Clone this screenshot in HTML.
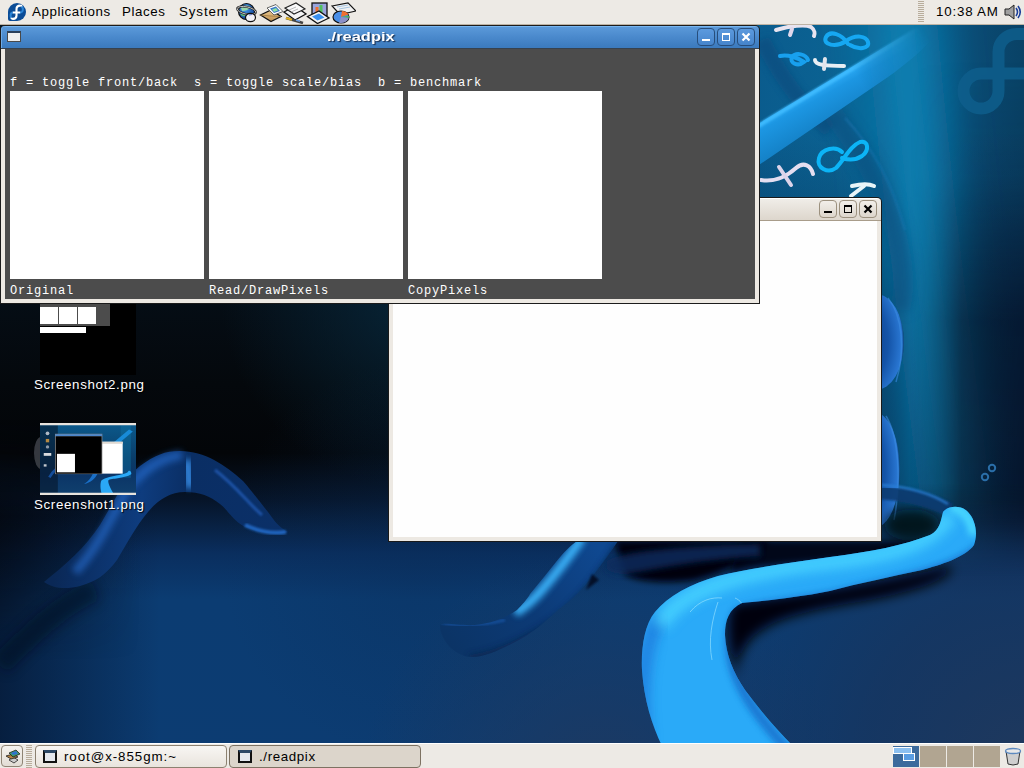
<!DOCTYPE html>
<html><head><meta charset="utf-8">
<style>
*{margin:0;padding:0;box-sizing:border-box}
html,body{width:1024px;height:768px;overflow:hidden;background:#0a2a50}
body{position:relative;font-family:"Liberation Sans",sans-serif}
.abs{position:absolute}
#wall{position:absolute;left:0;top:0;width:1024px;height:768px}
/* top panel */
#toppanel{position:absolute;left:0;top:0;width:1024px;height:25px;background:#edeae5;border-bottom:1px solid #bdb3a4}
.ptxt{position:absolute;top:4px;font-size:13.33px;color:#000;white-space:pre;line-height:15px}
/* bottom panel */
#botpanel{position:absolute;left:0;top:743px;width:1024px;height:25px;background:#edeae5;border-top:1px solid #fff}
/* windows */
.win{position:absolute}
.mono{font-family:"Liberation Mono",monospace;font-size:12px;letter-spacing:0.8px;color:#fff;white-space:pre;position:absolute;line-height:13px}
.btn{position:absolute;width:18px;height:18px;border-radius:4px}
.lbl{position:absolute;font-size:13.33px;color:#fff;white-space:pre;text-shadow:1px 1px 1px #000;line-height:15px}
</style></head><body>

<svg id="wall" width="1024" height="768" viewBox="0 0 1024 768">
<defs>
  <linearGradient id="bg" x1="0" y1="0" x2="0" y2="768" gradientUnits="userSpaceOnUse">
    <stop offset="0" stop-color="#061826"/>
    <stop offset="0.39" stop-color="#050d15"/>
    <stop offset="0.5" stop-color="#04080c"/>
    <stop offset="0.59" stop-color="#030508"/>
    <stop offset="0.65" stop-color="#061428"/>
    <stop offset="0.72" stop-color="#0a2e5e"/>
    <stop offset="0.78" stop-color="#0b3c72"/>
    <stop offset="1" stop-color="#0c3c72"/>
  </linearGradient>
  <linearGradient id="teal" x1="740" y1="0" x2="1024" y2="0" gradientUnits="userSpaceOnUse">
    <stop offset="0" stop-color="#0a5a8c"/>
    <stop offset="0.4" stop-color="#0b6494"/>
    <stop offset="0.65" stop-color="#0b5a88"/>
    <stop offset="0.82" stop-color="#0a4b74"/>
    <stop offset="1" stop-color="#094266"/>
  </linearGradient>
  <linearGradient id="tealfade" x1="0" y1="0" x2="0" y2="768" gradientUnits="userSpaceOnUse">
    <stop offset="0" stop-color="#fff" stop-opacity="1"/>
    <stop offset="0.63" stop-color="#fff" stop-opacity="1"/>
    <stop offset="0.75" stop-color="#fff" stop-opacity="0"/>
  </linearGradient>
  <mask id="tmask" maskUnits="userSpaceOnUse" x="0" y="0" width="1024" height="768"><rect x="0" y="0" width="1024" height="768" fill="url(#tealfade)"/></mask>
  <linearGradient id="rdarkH" x1="910" y1="0" x2="1024" y2="0" gradientUnits="userSpaceOnUse">
    <stop offset="0" stop-color="#06162a" stop-opacity="0"/>
    <stop offset="0.45" stop-color="#06162a" stop-opacity="0.75"/>
    <stop offset="1" stop-color="#05132a" stop-opacity="0.95"/>
  </linearGradient>
  <linearGradient id="rdarkV" x1="0" y1="60" x2="0" y2="640" gradientUnits="userSpaceOnUse">
    <stop offset="0" stop-color="#fff" stop-opacity="0"/>
    <stop offset="0.2" stop-color="#fff" stop-opacity="0.15"/>
    <stop offset="0.45" stop-color="#fff" stop-opacity="0.85"/>
    <stop offset="0.8" stop-color="#fff" stop-opacity="1"/>
    <stop offset="1" stop-color="#fff" stop-opacity="0"/>
  </linearGradient>
  <mask id="rdm" maskUnits="userSpaceOnUse" x="0" y="0" width="1024" height="768"><rect x="0" y="0" width="1024" height="768" fill="url(#rdarkV)"/></mask>
  <linearGradient id="beamH" x1="860" y1="0" x2="1010" y2="0" gradientUnits="userSpaceOnUse">
    <stop offset="0" stop-color="#0d74a4" stop-opacity="0"/>
    <stop offset="0.3" stop-color="#0d74a4" stop-opacity="0.45"/>
    <stop offset="0.55" stop-color="#0d74a4" stop-opacity="0.75"/>
    <stop offset="1" stop-color="#0d74a4" stop-opacity="0"/>
  </linearGradient>
  <linearGradient id="tubeD" x1="820" y1="80" x2="845" y2="125" gradientUnits="userSpaceOnUse">
    <stop offset="0" stop-color="#34b4ff"/>
    <stop offset="0.3" stop-color="#1c96e2"/>
    <stop offset="1" stop-color="#127cc0"/>
  </linearGradient>
  <linearGradient id="leftdark" x1="0" y1="0" x2="160" y2="0" gradientUnits="userSpaceOnUse">
    <stop offset="0" stop-color="#04122a" stop-opacity="0.7"/>
    <stop offset="1" stop-color="#04122a" stop-opacity="0"/>
  </linearGradient>
  <radialGradient id="brdusk" cx="1024" cy="760" r="320" gradientUnits="userSpaceOnUse">
    <stop offset="0" stop-color="#22385a" stop-opacity="0.85"/>
    <stop offset="0.5" stop-color="#1c3256" stop-opacity="0.55"/>
    <stop offset="1" stop-color="#1c3256" stop-opacity="0"/>
  </radialGradient>
  <radialGradient id="bldusk" cx="600" cy="790" r="240" gradientUnits="userSpaceOnUse">
    <stop offset="0" stop-color="#22385c" stop-opacity="0.75"/>
    <stop offset="1" stop-color="#22385c" stop-opacity="0"/>
  </radialGradient>
  <linearGradient id="tubeG" x1="700" y1="560" x2="770" y2="700" gradientUnits="userSpaceOnUse">
    <stop offset="0" stop-color="#40caff"/>
    <stop offset="0.3" stop-color="#2ba8f8"/>
    <stop offset="1" stop-color="#2596f0"/>
  </linearGradient>
  <linearGradient id="tubeEnd" x1="0" y1="505" x2="0" y2="580" gradientUnits="userSpaceOnUse">
    <stop offset="0" stop-color="#3ad4ff"/>
    <stop offset="1" stop-color="#2aa6f6"/>
  </linearGradient>
  <filter id="b1" x="-20%" y="-20%" width="140%" height="140%"><feGaussianBlur stdDeviation="1"/></filter>
  <filter id="b3" x="-30%" y="-30%" width="160%" height="160%"><feGaussianBlur stdDeviation="3"/></filter>
  <filter id="b6" x="-40%" y="-40%" width="180%" height="180%"><feGaussianBlur stdDeviation="6"/></filter>
  <linearGradient id="tdarkV" x1="0" y1="130" x2="0" y2="560" gradientUnits="userSpaceOnUse">
    <stop offset="0" stop-color="#072a4c" stop-opacity="0"/>
    <stop offset="0.45" stop-color="#072a4c" stop-opacity="0.6"/>
    <stop offset="1" stop-color="#072a4c" stop-opacity="0.55"/>
  </linearGradient>
  <filter id="b25" x="-150%" y="-20%" width="400%" height="140%"><feGaussianBlur stdDeviation="22"/></filter>
  <filter id="b10" x="-60%" y="-60%" width="220%" height="220%"><feGaussianBlur stdDeviation="10"/></filter>
</defs>
<rect width="1024" height="768" fill="url(#bg)"/>
<rect x="0" y="500" width="160" height="268" fill="url(#leftdark)"/>
<linearGradient id="ldV" x1="0" y1="420" x2="0" y2="660" gradientUnits="userSpaceOnUse">
  <stop offset="0" stop-color="#fff" stop-opacity="0"/><stop offset="0.4" stop-color="#fff" stop-opacity="1"/><stop offset="1" stop-color="#fff" stop-opacity="0"/>
</linearGradient>
<mask id="ldm" maskUnits="userSpaceOnUse" x="0" y="0" width="1024" height="768"><rect x="0" y="0" width="1024" height="768" fill="url(#ldV)"/></mask>
<linearGradient id="ldH" x1="0" y1="0" x2="140" y2="0" gradientUnits="userSpaceOnUse">
  <stop offset="0" stop-color="#03070d" stop-opacity="0.8"/><stop offset="1" stop-color="#03070d" stop-opacity="0"/>
</linearGradient>
<rect x="0" y="420" width="140" height="240" fill="url(#ldH)" mask="url(#ldm)"/>
<radialGradient id="ctint" cx="420" cy="290" r="200" gradientUnits="userSpaceOnUse">
  <stop offset="0" stop-color="#08283c" stop-opacity="0.9"/>
  <stop offset="1" stop-color="#08283c" stop-opacity="0"/>
</radialGradient>
<rect x="0" y="0" width="1024" height="768" fill="url(#ctint)"/>
<radialGradient id="navyR" cx="420" cy="560" rx="300" r="200" gradientUnits="userSpaceOnUse">
  <stop offset="0" stop-color="#0a2d58" stop-opacity="0.35"/>
  <stop offset="1" stop-color="#0a2d58" stop-opacity="0"/>
</radialGradient>
<rect x="0" y="0" width="1024" height="768" fill="url(#navyR)"/>
<rect x="0" y="0" width="1024" height="768" fill="url(#bldusk)"/>
<rect x="0" y="0" width="1024" height="768" fill="url(#brdusk)"/>

<!-- teal right zone -->
<g mask="url(#tmask)">
  <rect x="740" y="0" width="300" height="640" fill="url(#teal)"/>
  <rect x="740" y="0" width="300" height="640" fill="url(#tdarkV)"/>
  <path d="M900 0 C912 150 936 350 964 560" stroke="#0e7cae" stroke-width="70" fill="none" opacity="1" filter="url(#b25)"/>
  <path d="M900 0 C912 150 936 350 964 560" stroke="#1084b4" stroke-width="24" fill="none" opacity="0.45" filter="url(#b10)"/>
  <rect x="910" y="0" width="114" height="640" fill="url(#rdarkH)" mask="url(#rdm)"/>
</g>
<!-- faint big infinity top right -->
<path d="M1030 73.5 L981 73.5 A17.5 17.5 0 1 0 998.5 91 L998.5 52 A18 18 0 0 1 1016.5 34 L1030 34" fill="none" stroke="#0e5e8c" stroke-width="12" opacity="0.85"/>
<!-- dark curved arc top region -->
<path d="M762 40 C780 75 800 105 830 130" stroke="#0a4a7c" stroke-width="16" fill="none" opacity="0.6" filter="url(#b3)"/>
<path d="M830 110 C860 150 880 180 895 230 C905 265 905 290 900 310" stroke="#0a4a78" stroke-width="20" fill="none" opacity="0.5" filter="url(#b6)"/>
<path d="M845 118 C875 150 893 185 905 230" stroke="#1a7ab8" stroke-width="2" fill="none" opacity="0.5" filter="url(#b1)"/>
<!-- bright diagonal tube top -->
<defs>
  <linearGradient id="tubeDfade" x1="760" y1="150" x2="930" y2="40" gradientUnits="userSpaceOnUse">
    <stop offset="0" stop-color="#fff" stop-opacity="1"/>
    <stop offset="0.6" stop-color="#fff" stop-opacity="1"/>
    <stop offset="1" stop-color="#fff" stop-opacity="0"/>
  </linearGradient>
  <mask id="tdm" maskUnits="userSpaceOnUse" x="0" y="0" width="1024" height="768"><rect x="700" y="0" width="324" height="300" fill="url(#tubeDfade)"/></mask>
</defs>
<g mask="url(#tdm)">
  <path d="M740 135 L888 45 C900 38 915 30 925 24 L945 24 C930 45 905 65 888 77 L740 178 Z" fill="url(#tubeD)"/>
  <path d="M740 137 L888 47 L925 24" stroke="#40bcff" stroke-width="4" fill="none" opacity="0.95" filter="url(#b1)"/>
</g>
<!-- small symbols -->
<g fill="none" stroke-linecap="round">
  <!-- upper cyan infinity -->
  <path d="M848 44 C842 34 830 30 826 37 C822 45 836 48 846 41 C856 34 866 36 868 42 C870 49 858 50 850 45" stroke="#16a8f2" stroke-width="4"/>
  <!-- lower infinity -->
  <path d="M808 60 C806 54 796 52 792 57 C789 63 798 67 804 62 C798 58 788 54 780 56" stroke="#18a0ee" stroke-width="4"/>
  <!-- white f top -->
  <path d="M776 30 C790 26 805 24 811 27 C815 30 815 34 814 36" stroke="#e8e4f0" stroke-width="4"/>
  <path d="M792 29 L790 35" stroke="#e0d8ec" stroke-width="4"/>
  <!-- white f lower -->
  <path d="M815 60 C815 65 825 66 844 66" stroke="#e8eef4" stroke-width="4"/>
  <path d="M825 59 L824 69" stroke="#e0e4ec" stroke-width="4"/>
  <!-- cyan infinity lower -->
  <path d="M842 152 C836 146 822 148 819 158 C816 168 828 174 836 168 C844 160 850 146 860 142 C868 140 870 150 862 156 C856 160 848 160 842 158" stroke="#0cb4f6" stroke-width="4"/>
  <!-- white f middle left -->
  <path d="M761 180 C772 182 785 178 796 168 C804 161 811 166 813 174" stroke="#e4def0" stroke-width="4"/>
  <path d="M779 167 L791 185" stroke="#dcd4ea" stroke-width="4"/>
  <!-- white x lower -->
  <path d="M852 186 C860 184 868 183 874 186" stroke="#e8f4f8" stroke-width="4"/>
  <path d="M851 196 L864 186" stroke="#e8f4f8" stroke-width="4"/>
</g>
<!-- glassy balls right of window 2 -->
<defs>
  <radialGradient id="ball" cx="0.3" cy="0.5" r="0.7">
    <stop offset="0" stop-color="#0c3c80"/>
    <stop offset="0.6" stop-color="#1454a8"/>
    <stop offset="0.95" stop-color="#2a78d4"/>
    <stop offset="1" stop-color="#0a4070"/>
  </radialGradient>
</defs>
<ellipse cx="876" cy="342" rx="28" ry="48" fill="url(#ball)"/>
<ellipse cx="874" cy="470" rx="26" ry="58" fill="url(#ball)"/>
<path d="M888 298 C902 315 906 350 896 382" stroke="#3a8ae0" stroke-width="1.5" fill="none" opacity="0.6"/>
<path d="M886 416 C898 435 902 480 894 520" stroke="#3a8ae0" stroke-width="1.5" fill="none" opacity="0.6"/>
<!-- small infinity right -->
<g fill="none" stroke="#2a6ea8" stroke-width="2"><circle cx="985" cy="477" r="3.2"/><circle cx="992" cy="468" r="3.2"/></g>

<!-- arch tube left -->
<defs>
  <linearGradient id="archG" x1="60" y1="500" x2="290" y2="520" gradientUnits="userSpaceOnUse">
    <stop offset="0" stop-color="#0a2856"/>
    <stop offset="0.35" stop-color="#0e3c7e"/>
    <stop offset="0.55" stop-color="#0a2e64"/>
    <stop offset="1" stop-color="#0b3068"/>
  </linearGradient>
</defs>
<path d="M0 665 C30 635 60 605 95 590" stroke="#03101f" stroke-width="22" fill="none" opacity="0.5" filter="url(#b6)"/>
<path d="M44 582 C65 565 85 548 100 525 C115 500 125 478 140 466 C155 455 165 451 180 451 C205 451 225 465 243 481 C255 495 262 505 268 512 C275 522 280 528 288 532 C275 536 255 532 245 527 C232 520 228 510 220 504 C210 496 200 492 185 492 C170 492 158 500 148 512 C136 526 126 545 117 560 C106 575 95 582 80 586 C65 590 52 588 44 582 Z" fill="url(#archG)"/>
<path d="M75 572 C98 548 112 515 127 490 C142 470 160 458 182 455" stroke="#2a74dc" stroke-width="9" fill="none" opacity="0.55" filter="url(#b3)"/>
<path d="M187 460 L190 488" stroke="#3a96f4" stroke-width="10" opacity="0.8" filter="url(#b3)"/>
<path d="M215 470 C235 485 250 505 262 515" stroke="#2a6ad0" stroke-width="3" fill="none" opacity="0.6" filter="url(#b1)"/>
<path d="M245 525 C260 532 275 534 286 532" stroke="#2a7ce4" stroke-width="4" fill="none" opacity="0.7" filter="url(#b1)"/>
<!-- shadows near tubes -->
<path d="M615 541 L770 541 C750 560 725 572 695 580 C665 584 640 582 625 575 Z" fill="#020508" filter="url(#b3)"/>
<path d="M740 541 L950 541 L945 548 C900 556 820 560 760 566 L730 572 Z" fill="#03060b" opacity="0.85" filter="url(#b3)"/>
<path d="M732 604 C760 598 850 590 950 566 C960 575 920 592 860 602 C800 612 770 620 750 640 C738 655 735 670 738 680 C728 650 725 620 732 604 Z" fill="#020408" filter="url(#b6)"/>
<ellipse cx="912" cy="525" rx="28" ry="16" fill="#03080f" opacity="0.8" filter="url(#b6)"/>
<!-- dark rounded tube between second tube and big tube -->
<path d="M608 560 C630 550 690 546 760 544 L760 556 C700 560 660 568 628 574 C610 575 602 568 608 560 Z" fill="#0a2c5c" opacity="0.85" filter="url(#b3)"/>

<!-- second tube under window 2 -->
<defs><linearGradient id="t2G" x1="600" y1="550" x2="450" y2="645" gradientUnits="userSpaceOnUse">
  <stop offset="0" stop-color="#0f4890"/><stop offset="0.5" stop-color="#0c3a76"/><stop offset="1" stop-color="#0b3466"/></linearGradient>
  <clipPath id="t2clip"><path d="M577 541 L618 541 C608 555 600 567 590 579 C578 595 568 602 558 610 C545 622 530 635 515 642 C500 650 485 657 472 657 C455 657 440 640 440 625 C445 622 460 626 475 625 C495 623 508 616 517 610 C522 605 528 598 530 594 C540 582 548 572 556 562 C564 552 570 546 577 541 Z"/></clipPath>
</defs>
<path d="M577 541 L618 541 C608 555 600 567 590 579 C578 595 568 602 558 610 C545 622 530 635 515 642 C500 650 485 657 472 657 C455 657 440 640 440 625 C445 622 460 626 475 625 C495 623 508 616 517 610 C522 605 528 598 530 594 C540 582 548 572 556 562 C564 552 570 546 577 541 Z" fill="url(#t2G)"/>
<g clip-path="url(#t2clip)">
  <path d="M582 538 C570 555 555 575 540 592 C532 601 525 607 515 613" stroke="#3cb8ff" stroke-width="9" fill="none" opacity="0.95" filter="url(#b3)"/>
  <path d="M620 545 C605 570 585 600 555 622 C530 640 500 655 470 660" stroke="#082650" stroke-width="10" fill="none" opacity="0.8" filter="url(#b3)"/>
  <path d="M440 622 C455 626 480 626 505 620" stroke="#1a5cb0" stroke-width="3" fill="none" opacity="0.6" filter="url(#b1)"/>
</g>
<path d="M586 590 L592 574 L599 580 Z" fill="#020610" opacity="0.7" filter="url(#b1)"/>
<path d="M880 492 C905 494 930 500 950 510" stroke="#0c3a70" stroke-width="14" fill="none" opacity="0.9" filter="url(#b1)"/>
<path d="M882 485 C910 487 932 494 948 504" stroke="#2a80d8" stroke-width="2.5" fill="none" opacity="0.8" filter="url(#b1)"/>

<!-- big tube -->
<clipPath id="tubeClip"><path id="tubeP" d="M943 512 C948 505 962 505 968 512 C976 520 978 535 974 545 C966 557 940 565 922 570 C890 577 860 583 830 591 C795 598 762 601 742 603 C729 609 725 620 725 635 C726 655 733 672 745 690 C760 710 775 728 793 746 L662 746 C652 725 644 700 642 670 C641 650 644 625 655 612 C668 596 690 584 718 576 C750 568 790 563 830 557 C870 552 905 545 930 535 C940 530 941 520 943 512 Z"/></clipPath>
<g clip-path="url(#tubeClip)">
  <rect x="600" y="480" width="400" height="280" fill="#2aaaf8"/>
  <path d="M978 548 C960 568 900 580 830 596 C790 604 755 605 738 612 C728 628 728 652 735 672 C745 702 770 732 800 762" stroke="#176cc8" stroke-width="10" fill="none" opacity="0.8" filter="url(#b3)"/>
  <path d="M645 744 C640 700 640 650 660 615" stroke="#1b6fd6" stroke-width="14" fill="none" opacity="0.7" filter="url(#b6)"/>
  <path d="M660 625 C680 590 740 572 830 562 C890 555 930 545 950 515" stroke="#4ad4ff" stroke-width="16" fill="none" opacity="0.85" filter="url(#b6)"/>
  <path d="M950 508 C962 506 972 520 974 535" stroke="#50e0ff" stroke-width="10" fill="none" opacity="0.8" filter="url(#b3)"/>
  <path d="M690 612 C700 600 712 597 722 598 M718 602 C712 620 708 640 712 660 M735 598 C740 600 745 605 742 612" stroke="#a0e8ff" stroke-width="1" fill="none" opacity="0.6"/>
</g>
</svg>

<!-- top panel -->
<div id="toppanel">
  <svg class="abs" style="left:8px;top:3px" width="18" height="18" viewBox="0 0 18 18">
    <path d="M9 0 A9 9 0 0 1 18 9 A9 9 0 0 1 9 18 L2 18 Q0 18 0 16 L0 9 A9 9 0 0 1 9 0 Z" fill="#0b4c96"/>
    <path d="M13.5 3.5 C15.8 5.2 15.2 9.5 12 9.5 M5 9.5 C2.2 9.6 2 13.5 3.5 15.2" stroke="#2a84d6" stroke-width="2" fill="none"/>
    <path d="M8.5 9.5 L8.5 6.2 C8.5 3.6 10.3 2.6 12 2.6 C13 2.6 13.6 3.1 13.6 3.6 M8.5 9.5 L8.5 12.5 C8.5 15 6.6 15.9 5 15.9 C4 15.9 3.4 15.3 3.4 14.8 M4.8 9.5 L12.2 9.5" stroke="#fff" stroke-width="2.1" fill="none"/>
  </svg>
  <div class="ptxt" style="left:32px;letter-spacing:0.57px">Applications</div>
  <div class="ptxt" style="left:122px;letter-spacing:0.6px">Places</div>
  <div class="ptxt" style="left:179px;letter-spacing:0.9px">System</div>
  <div class="ptxt" style="left:936px;letter-spacing:0.8px">10:38 AM</div>
  <!-- launcher icons -->
  <svg class="abs" style="left:236px;top:2px" width="120" height="22" viewBox="0 0 120 22">
    <defs>
      <radialGradient id="glb" cx="0.4" cy="0.35" r="0.7"><stop offset="0" stop-color="#4aa0f0"/><stop offset="1" stop-color="#0c3c90"/></radialGradient>
      <linearGradient id="env" x1="0" y1="0" x2="0" y2="1"><stop offset="0" stop-color="#e8c890"/><stop offset="1" stop-color="#c09050"/></linearGradient>
    </defs>
    <!-- globe+mouse -->
    <circle cx="10.5" cy="9.5" r="8" fill="url(#glb)" stroke="#111" stroke-width="1.2"/>
    <path d="M5 6 C7 3 12 3 14 5 C13 8 9 9 6 9 Z" fill="#9ee0a8" opacity="0.9"/>
    <path d="M5 12 C6 13 8 14 9 13" stroke="#60c070" stroke-width="1.5" fill="none"/>
    <ellipse cx="10.5" cy="8.5" rx="9.5" ry="3.6" fill="none" stroke="#222" stroke-width="2.2" transform="rotate(12 10.5 8.5)"/>
    <ellipse cx="10.5" cy="8.5" rx="9.5" ry="3.6" fill="none" stroke="#c8c8c8" stroke-width="0.9" transform="rotate(12 10.5 8.5)"/>
    <ellipse cx="14.5" cy="15.5" rx="5" ry="4.2" fill="#f2f2f8" stroke="#111" stroke-width="1.2"/>
    <path d="M13 13 L16 12.5" stroke="#6070c0" stroke-width="1.2"/>
    <!-- envelope -->
    <path d="M24.5 13 L35 19.5 L45 14.5 L35 8 Z" fill="url(#env)" stroke="#111" stroke-width="1.3"/>
    <path d="M24.5 13 L34 14 L45 14.5" stroke="#a07840" stroke-width="0.8" fill="none"/>
    <path d="M31 6 L40 2.5 L47 9.5 L38 13 Z" fill="#fff" stroke="#555" stroke-width="0.9"/>
    <path d="M34 6.5 L40 4.5 L44 9 L38 11 Z" fill="#3a78c8"/>
    <path d="M36 7.5 L40 6 L42 8.5 L38 10 Z" fill="#90e0a0"/>
    <!-- writer doc -->
    <path d="M48 10 L59 4 L70 12 L59 18 Z" fill="#f4f4f4" stroke="#111" stroke-width="1.3"/>
    <path d="M49 6 L60 1 L69 7 L58 12 Z" fill="#fafafa" stroke="#222" stroke-width="1.1"/>
    <path d="M53 8 L60 5 M55 10 L62 7" stroke="#aaa" stroke-width="0.8"/>
    <path d="M50 16 L67 21" stroke="#444" stroke-width="2.6"/>
    <path d="M50 16 L56 17.8" stroke="#e0b020" stroke-width="2.2"/>
    <path d="M60 18 L64 19.2" stroke="#6aa0e8" stroke-width="1.6"/>
    <!-- impress -->
    <rect x="76" y="1" width="15" height="13" fill="#9aa4dc" stroke="#111" stroke-width="1.3"/>
    <rect x="79.5" y="5" width="3" height="6" fill="#f07030"/>
    <rect x="83.5" y="3" width="3" height="8" fill="#50c060"/>
    <path d="M71.5 14.5 L83 9 L93 16 L81.5 21.5 Z" fill="#f4f4f4" stroke="#111" stroke-width="1.3"/>
    <path d="M76 14.5 L83 11.5 L88.5 15.5 L81.5 18.5 Z" fill="#3a90f0"/>
    <!-- calc -->
    <path d="M96 4 L112 0.8 L120 9 L104 12.5 Z" fill="#f2f2f2" stroke="#111" stroke-width="1.2"/>
    <path d="M101 5 L112 3 M103 7 L114 5" stroke="#9cc0e0" stroke-width="0.9"/>
    <ellipse cx="105" cy="15" rx="8" ry="6" fill="#4a8fe8" stroke="#111" stroke-width="1.2"/>
    <path d="M105 15 L106 9 A8 6 0 0 1 112.5 12.5 Z" fill="#f07030"/>
    <path d="M105 15 L112.8 13.5 A8 6 0 0 1 112.8 16 Z" fill="#50b060"/>
    <path d="M105 15 L112.8 16 A8 6 0 0 1 103 20.8 Z" fill="#8c90c8"/>
  </svg>
  <!-- handle -->
  <div class="abs" style="left:918px;top:1px;width:6px;height:22px;background:repeating-linear-gradient(#b8ad9c 0 1px,transparent 1px 2px)"></div>
  <!-- volume -->
  <svg class="abs" style="left:1004px;top:4px" width="20" height="16" viewBox="0 0 20 16">
    <path d="M1 5 L5 5 L10 1 L10 15 L5 11 L1 11 Z" fill="#a0a0a0" stroke="#222" stroke-width="1"/>
    <path d="M12 4 Q15 8 12 12" stroke="#1b3f9a" stroke-width="1.6" fill="none"/>
    <path d="M14 2 Q18.5 8 14 14" stroke="#1b3f9a" stroke-width="1.6" fill="none"/>
  </svg>
</div>

<!-- desktop icons -->
<div class="abs" style="left:40px;top:304px;width:96px;height:71px;background:#000">
  <div class="abs" style="left:0;top:0;width:70px;height:22px;background:#4c4c4c"></div>
  <div class="abs" style="left:0;top:3px;width:18px;height:17px;background:#fff"></div>
  <div class="abs" style="left:19px;top:3px;width:18px;height:17px;background:#fff"></div>
  <div class="abs" style="left:38px;top:3px;width:18px;height:17px;background:#fff"></div>
  <div class="abs" style="left:0;top:23px;width:46px;height:6px;background:#fff"></div>
</div>
<div class="lbl" style="left:34px;top:377px;letter-spacing:0.66px">Screenshot2.png</div>
<div class="abs" style="left:34px;top:437px;width:14px;height:32px;border-radius:50%;background:#3e4249;opacity:0.85"></div>
<svg class="abs" style="left:40px;top:423px" width="96" height="72" viewBox="0 0 1024 768" preserveAspectRatio="none">
  <defs>
    <linearGradient id="thbg" x1="0" y1="0" x2="0" y2="768" gradientUnits="userSpaceOnUse">
      <stop offset="0" stop-color="#0b5a8c"/>
      <stop offset="0.5" stop-color="#0a3c68"/>
      <stop offset="0.7" stop-color="#0b3466"/>
      <stop offset="1" stop-color="#10406e"/>
    </linearGradient>
  </defs>
  <rect width="1024" height="768" fill="url(#thbg)"/>
  <rect x="0" y="24" width="190" height="720" fill="#061222" opacity="0.55"/>
  <rect x="860" y="24" width="110" height="560" fill="#0d7aac" opacity="0.35"/>
  <path d="M720 260 L950 70 L990 90 L740 300 Z" fill="#1a90e0" opacity="0.9"/>
  <path d="M943 512 C962 505 976 520 974 545 C966 560 900 578 830 590 C790 596 740 600 728 612 C725 650 760 710 793 768 L662 768 C640 700 641 640 655 612 C690 584 790 563 830 557 C905 545 941 530 943 512 Z" fill="#2aa8f6"/>
  <path d="M564 541 L613 541 C590 590 540 640 470 650 C520 620 545 580 564 541 Z" fill="#1a70c8"/>
  <path d="M100 580 C150 500 200 450 260 470" stroke="#1a60c0" stroke-width="30" fill="none" opacity="0.7"/>
  <rect x="0" y="0" width="1024" height="24" fill="#e8e4de"/>
  <rect x="0" y="744" width="1024" height="24" fill="#e8e4de"/>
  <circle cx="80" cy="110" r="20" fill="#d8dce4" opacity="0.8"/>
  <rect x="62" y="170" width="36" height="36" fill="#e0a040" opacity="0.8"/>
  <circle cx="80" cy="255" r="18" fill="#c8ccd4" opacity="0.7"/>
  <rect x="40" y="320" width="80" height="30" fill="#f0f0f0" opacity="0.9"/>
  <rect x="40" y="440" width="30" height="25" fill="#f0f0f0" opacity="0.8"/>
  <rect x="661" y="200" width="221" height="340" fill="#fff"/>
  <rect x="661" y="200" width="221" height="22" fill="#e0dad2"/>
  <rect x="160" y="115" width="505" height="430" fill="#8a8a8a"/>
  <rect x="164" y="120" width="497" height="22" fill="#4a86cc"/>
  <rect x="168" y="142" width="489" height="398" fill="#000"/>
  <rect x="181" y="329" width="192" height="197" fill="#fff"/>
</svg>
<div class="lbl" style="left:34px;top:497px;letter-spacing:0.66px">Screenshot1.png</div>


<!-- window 2 (behind) -->
<div class="win" style="left:388px;top:197px;width:494px;height:345px;background:#1a1a1a;border-radius:5px 5px 0 0">
  <div class="abs" style="left:1px;top:1px;width:492px;height:23px;border-radius:4px 4px 0 0;background:linear-gradient(#f0ede8,#dcd5cb);border-top:1px solid #fff"></div>
  <div class="abs" style="left:1px;top:23px;width:492px;height:1px;background:#a89c8a"></div>
  <div class="abs" style="left:1px;top:24px;width:492px;height:320px;background:#ede9e3"></div>
  <div class="abs" style="left:5px;top:24px;width:484px;height:316px;background:#fefefe"></div>
  <div class="btn" style="left:431px;top:3px;border:1px solid #9c917f;background:linear-gradient(#f2efea,#ddd6cc)"><div class="abs" style="left:4px;top:10px;width:8px;height:2px;background:#000"></div></div>
  <div class="btn" style="left:451px;top:3px;border:1px solid #9c917f;background:linear-gradient(#f2efea,#ddd6cc)"><div class="abs" style="left:4px;top:4px;width:8px;height:8px;border:1.5px solid #000;border-top-width:2px"></div></div>
  <div class="btn" style="left:471px;top:3px;border:1px solid #9c917f;background:linear-gradient(#f2efea,#ddd6cc)">
    <svg class="abs" style="left:0;top:0" width="16" height="16"><path d="M4.5 4.5 L11.5 11.5 M11.5 4.5 L4.5 11.5" stroke="#000" stroke-width="2.2"/></svg></div>
</div>

<!-- readpix window -->
<div class="win" style="left:0;top:25px;width:760px;height:279px;background:#1c1c1c;border-radius:5px 5px 0 0">
  <div class="abs" style="left:1px;top:1px;width:758px;height:22px;border-radius:4px 4px 0 0;background:linear-gradient(#78b6f0 0,#78b6f0 1px,#5b99d9 1px,#4a89cc 50%,#3b7abd 100%);box-shadow:inset 1px 0 0 #6eaae6"></div>
  <div class="abs" style="left:1px;top:23px;width:758px;height:255px;background:#ede9e3"></div>
  <div class="abs" style="left:1px;top:23px;width:758px;height:1px;background:#37424e"></div>
  <div class="abs" style="left:5px;top:24px;width:750px;height:250px;background:#4c4c4c"></div>
  <div class="abs" style="left:7px;top:6px;width:14px;height:11px;background:#eeeeee;border:1px solid #4a4a4a;border-top:2px solid #2a3f5a"></div>
  <div class="abs" style="left:327px;top:4px;font-weight:bold;font-size:13.33px;color:#fff;transform:scaleX(1.235);transform-origin:0 0;text-shadow:1px 1px 1px #1a3050;line-height:15px;white-space:pre">./readpix</div>
  <div class="btn" style="left:697px;top:3px;border:1px solid #274e7c;background:linear-gradient(#5c9ade,#4584cb)"><div class="abs" style="left:4px;top:10px;width:8px;height:2px;background:#fff"></div></div>
  <div class="btn" style="left:717px;top:3px;border:1px solid #274e7c;background:linear-gradient(#5c9ade,#4584cb)"><div class="abs" style="left:4px;top:4px;width:8px;height:8px;border:1.5px solid #fff;border-top-width:2px"></div></div>
  <div class="btn" style="left:737px;top:3px;border:1px solid #274e7c;background:linear-gradient(#5c9ade,#4584cb)">
    <svg class="abs" style="left:0;top:0" width="16" height="16"><path d="M4.5 4.5 L11.5 11.5 M11.5 4.5 L4.5 11.5" stroke="#fff" stroke-width="2.2"/></svg></div>
  <div class="mono" style="left:10px;top:52px">f = toggle front/back  s = toggle scale/bias  b = benchmark</div>
  <div class="abs" style="left:10px;top:66px;width:194px;height:188px;background:#fff"></div>
  <div class="abs" style="left:209px;top:66px;width:194px;height:188px;background:#fff"></div>
  <div class="abs" style="left:408px;top:66px;width:194px;height:188px;background:#fff"></div>
  <div class="mono" style="left:10px;top:260px">Original</div>
  <div class="mono" style="left:209px;top:260px">Read/DrawPixels</div>
  <div class="mono" style="left:408px;top:260px">CopyPixels</div>
</div>

<!-- bottom panel -->
<div id="botpanel">
  <div class="abs" style="left:1px;top:1px;width:22px;height:22px;border:1px solid #8f8575;border-radius:4px;background:linear-gradient(#f5f3ef,#e2ddd5)">
    <svg class="abs" style="left:2px;top:2px" width="17" height="17" viewBox="0 0 17 17">
      <path d="M5 12 L10 15 L14 12 L9 9 Z" fill="#ccc" stroke="#222" stroke-width="0.8"/>
      <path d="M2 8 L7 11 L14 9 L9 6 Z" fill="#b08040" stroke="#222" stroke-width="0.8"/>
      <path d="M5 5 L12 2 L16 6 L9 9 Z" fill="#40a060" stroke="#222" stroke-width="0.8"/>
      <path d="M7 5 L12 3 L14 6 L9 7 Z" fill="#3070d0"/>
    </svg>
  </div>
  <div class="abs" style="left:26px;top:1px;width:6px;height:23px;background:repeating-linear-gradient(#b8ad9c 0 1px,transparent 1px 2px)"></div>
  <div class="abs" style="left:35px;top:1px;width:192px;height:23px;border:1px solid #8c8170;border-radius:4px;background:linear-gradient(#f8f6f3,#e9e4dd)">
    <div class="abs" style="left:7px;top:4px;width:14px;height:13px;border:2px solid #111;border-top-width:3px;border-top-color:#2c4866;background:#e4e8ee"></div>
    <div class="abs" style="left:28px;top:3px;font-size:13.33px;letter-spacing:0.93px;color:#000;white-space:pre;line-height:15px">root@x-855gm:~</div>
  </div>
  <div class="abs" style="left:229px;top:1px;width:192px;height:23px;border:1px solid #7d7262;border-radius:4px;background:#dcd5cb">
    <div class="abs" style="left:8px;top:4px;width:14px;height:13px;border:2px solid #111;border-top-width:3px;border-top-color:#2c4866;background:#e4e8ee"></div>
    <div class="abs" style="left:29px;top:3px;font-size:13.33px;letter-spacing:0.62px;color:#000;white-space:pre;line-height:15px">./readpix</div>
  </div>
  <!-- workspaces -->
  <div class="abs" style="left:893px;top:2px;width:26px;height:21px;background:#3c6a9c">
    <div class="abs" style="left:0;top:1px;width:19px;height:7px;background:#8cc0f0;border:1px solid #fff"></div>
    <div class="abs" style="left:10px;top:7px;width:12px;height:8px;background:#5a9de2;border:1px solid #fff"></div>
  </div>
  <div class="abs" style="left:920px;top:2px;width:26px;height:21px;background:#b1a591"></div>
  <div class="abs" style="left:947px;top:2px;width:26px;height:21px;background:#b1a591"></div>
  <div class="abs" style="left:974px;top:2px;width:26px;height:21px;background:#b1a591"></div>
  <!-- trash -->
  <svg class="abs" style="left:1004px;top:3px" width="18" height="19" viewBox="0 0 18 19">
    <path d="M2 4 L4 17 Q9 19 14 17 L16 4 Z" fill="#cfcfcf" stroke="#333" stroke-width="1"/>
    <ellipse cx="9" cy="4" rx="7.5" ry="2.5" fill="#e8e8e8" stroke="#5d8ac0" stroke-width="1.3"/>
  </svg>
</div>

</body></html>
